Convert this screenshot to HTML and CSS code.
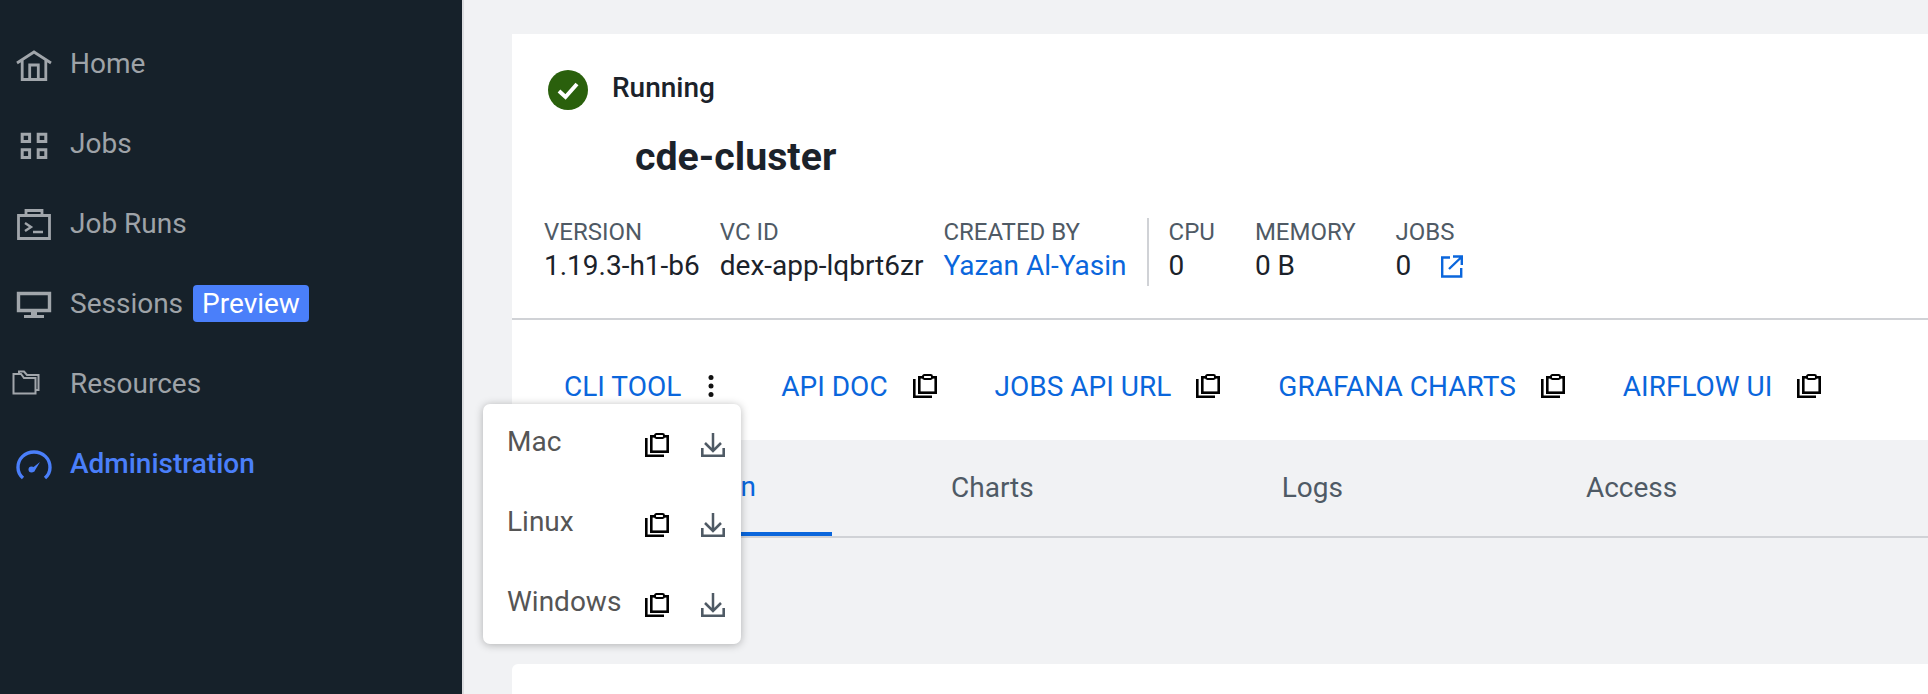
FILE: index.html
```html
<!DOCTYPE html>
<html lang="en">
<head>
    <meta charset="UTF-8">
    <title>cde-cluster</title>
    <link rel="stylesheet" href="styles.css">
</head>
<body>
    <svg class="sprites" width="0" height="0">
        <symbol id="copy" viewBox="0 0 24 24">
            <path d="M1.300 5v17.700h17.700" fill="none" stroke="#000" stroke-width="2.600"/>
            <rect x="6.300" y="3.300" width="16.400" height="15.400" fill="none" stroke="#000" stroke-width="2.600"/>
            <rect x="10" y="1" width="9" height="4" rx="1.400" fill="#fff" stroke="#000" stroke-width="2"/>
        </symbol>
        <symbol id="download" viewBox="0 0 24 24">
            <path d="M12 0v17M4 10l8 8 8-8" fill="none" stroke="#4f5a65" stroke-width="2.500"/>
            <path d="M1.300 15v7.700h21.400V15" fill="none" stroke="#4f5a65" stroke-width="2.600"/>
        </symbol>
    </svg>

    <nav class="sidebar">
        <a class="nav-item">
            <svg class="nav-icon" viewBox="0 0 36 36"><path d="M1 17 18 6l17 11M6.200 14v19.500h23.600V14M13.700 33V19h8.600v14" fill="none" stroke="#a1a6ab" stroke-width="2.800"/></svg>
            <span>Home</span>
        </a>
        <a class="nav-item">
            <svg class="nav-icon" viewBox="0 0 36 36"><path d="M6.200 8.200h7.400v7.200H6.200zM22.200 8.200h7.600v7.200h-7.600zM6.200 23.800h7.400v7.700H6.200zM22.200 23.800h7.600v7.700h-7.600z" fill="none" stroke="#a1a6ab" stroke-width="3"/></svg>
            <span>Jobs</span>
        </a>
        <a class="nav-item">
            <svg class="nav-icon" viewBox="0 0 36 36"><path d="M2.500 9.500h31v23h-31zM10 9V4.500h16V9" fill="none" stroke="#a1a6ab" stroke-width="2.800"/><path d="m9 17 6 4-6 4M17 26h10" fill="none" stroke="#a1a6ab" stroke-width="2.400"/></svg>
            <span>Job Runs</span>
        </a>
        <a class="nav-item">
            <svg class="nav-icon" viewBox="0 0 36 36"><path d="M2.500 7.500h31v17h-31z" fill="none" stroke="#a1a6ab" stroke-width="3.400"/><path d="M15 25h6v4h7v3H8v-3h7z" fill="#a1a6ab"/></svg>
            <span>Sessions</span>
            <span class="preview">Preview</span>
        </a>
        <a class="nav-item">
            <svg class="nav-icon folder" viewBox="0 0 28 26"><path d="M1.500 6v17.500h22V8H12L9 4H1.500zM7 4V1.500h5L15 5h11.500v15h-3" fill="none" stroke="#a1a6ab" stroke-width="2"/></svg>
            <span>Resources</span>
        </a>
        <a class="nav-item active">
            <svg class="nav-icon" viewBox="0 0 36 36"><path d="M7 32C3.500 29 2 25.500 2 21.500 2 12.500 9 6 18 6s16 6.500 16 15.500c0 4-1.500 7.500-5 10.500" fill="none" stroke="#4a7ffa" stroke-width="3.400"/><circle cx="15.500" cy="23.500" r="3" fill="#4a7ffa"/><path d="m15 23 9-7-6 10z" fill="#4a7ffa"/></svg>
            <span>Administration</span>
        </a>
    </nav>

    <main class="content">
        <section class="card">
            <div class="status">
                <svg class="status-icon" viewBox="0 0 40 40"><circle cx="20" cy="20" r="20" fill="#2a600c"/><path d="m11 21 6.500 6L29 14" fill="none" stroke="#fff" stroke-width="4"/></svg>
                <span class="status-text">Running</span>
            </div>
            <h1 class="title">cde-cluster</h1>
            <div class="meta">
                <div class="meta-col"><span class="meta-label">VERSION</span><span>1.19.3-h1-b6</span></div>
                <div class="meta-col"><span class="meta-label">VC ID</span><span>dex-app-lqbrt6zr</span></div>
                <div class="meta-col"><span class="meta-label">CREATED BY</span><a class="meta-link">Yazan Al-Yasin</a></div>
                <div class="meta-divider"></div>
                <div class="meta-col"><span class="meta-label">CPU</span><span>0</span></div>
                <div class="meta-col"><span class="meta-label">MEMORY</span><span>0 B</span></div>
                <div class="meta-col">
                    <span class="meta-label">JOBS</span>
                    <span class="jobs-value">0
                        <svg class="external" viewBox="0 0 22 24"><path d="M9 3.500H1.200v19h19V14" fill="none" stroke="#0a66dc" stroke-width="2.400"/><path d="M8 15 20 3.500M12 2.500h8.800v8.500" fill="none" stroke="#0a66dc" stroke-width="2.400"/></svg>
                    </span>
                </div>
            </div>
            <div class="links">
                <div class="link-item cli">
                    <a>CLI TOOL</a>
                    <svg class="dots" viewBox="0 0 10 24"><circle cx="5" cy="3.500" r="2.500"/><circle cx="5" cy="12" r="2.500"/><circle cx="5" cy="20.500" r="2.500"/></svg>
                </div>
                <div class="link-item"><a>API DOC</a><svg class="tool-icon"><use href="#copy"/></svg></div>
                <div class="link-item"><a>JOBS API URL</a><svg class="tool-icon"><use href="#copy"/></svg></div>
                <div class="link-item"><a>GRAFANA CHARTS</a><svg class="tool-icon"><use href="#copy"/></svg></div>
                <div class="link-item"><a>AIRFLOW UI</a><svg class="tool-icon"><use href="#copy"/></svg></div>
            </div>
        </section>

        <div class="tabs">
            <a class="tab tab-active">Configuration</a>
            <a class="tab tab-charts">Charts</a>
            <a class="tab tab-logs">Logs</a>
            <a class="tab tab-access">Access</a>
        </div>

        <section class="card card-bottom"></section>

        <!-- CLI TOOL dropdown -->
        <div class="menu">
            <div class="menu-item"><span class="menu-name">Mac</span><svg class="tool-icon"><use href="#copy"/></svg><svg class="tool-icon"><use href="#download"/></svg></div>
            <div class="menu-item"><span class="menu-name">Linux</span><svg class="tool-icon"><use href="#copy"/></svg><svg class="tool-icon"><use href="#download"/></svg></div>
            <div class="menu-item"><span class="menu-name">Windows</span><svg class="tool-icon"><use href="#copy"/></svg><svg class="tool-icon"><use href="#download"/></svg></div>
        </div>
    </main>
</body>
</html>
```

FILE: styles.css
```css
html, body {
    margin: 0;
    height: 694px;
    overflow: hidden;
}
body {
    display: flex;
    font-family: Roboto, "Liberation Sans", sans-serif;
    background-color: #f1f2f4;
    color: #1b222a;
}
.sprites {
    position: absolute;
}

/* sidebar */
.sidebar {
    width: 464px;
    flex-shrink: 0;
    height: 694px;
    padding-top: 24px;
    box-sizing: border-box;
    background-color: #16212a;
    border-right: 2px solid #dcdde0;
}
.nav-item {
    display: flex;
    align-items: center;
    height: 80px;
    padding-left: 16px;
    font-size: 28px;
    color: #9ea3a8;
}
.nav-item span {
    margin-bottom: 2px;
}
.nav-icon {
    width: 36px;
    height: 36px;
    margin-right: 18px;
    flex-shrink: 0;
}
.folder {
    width: 28px;
    height: 26px;
    margin-left: -4px;
    margin-right: 30px;
    margin-top: -3px;
}
.active {
    color: #4a7ffa;
    font-weight: 500;
}
.preview {
    margin-left: 10px;
    padding: 0 9px;
    line-height: 37px;
    border-radius: 4px;
    background-color: #4a7ffa;
    color: #fff;
}

/* main */
.content {
    position: relative;
    flex-grow: 1;
    padding: 34px 0 0 48px;
    overflow: hidden;
}
.card {
    background-color: #fff;
}
.status {
    display: flex;
    align-items: center;
    padding: 36px 0 0 36px;
    font-size: 28px;
    font-weight: 500;
}
.status-icon {
    width: 40px;
    height: 40px;
    margin-right: 24px;
}
.status-text {
    margin-top: -6px;
}
.title {
    margin: 23px 0 0 123px;
    font-size: 39.3px;
    line-height: 48px;
    font-weight: 700;
}
.meta {
    display: flex;
    align-items: center;
    margin: 37px 0 0 32px;
    height: 68px;
    font-size: 28px;
}
.meta-col {
    display: flex;
    flex-direction: column;
    margin-top: -6px;
    margin-right: 20px;
    line-height: 34px;
}
.meta-label {
    font-size: 24px;
    color: #4f5a65;
}
.meta-link {
    color: #0a66dc;
}
.meta-divider {
    width: 2px;
    height: 68px;
    background-color: #d0d2d6;
    margin-right: 20px;
}
.meta-col:nth-child(n+5) {
    margin-right: 40px;
}
.jobs-value {
    display: flex;
    align-items: center;
}
.external {
    width: 22px;
    height: 24px;
    margin-left: 30px;
}
.links {
    display: flex;
    align-items: center;
    height: 108px;
    margin-top: 32px;
    padding: 12px 0 0 52px;
    border-top: 2px solid #d0d2d6;
    font-size: 28px;
    color: #0a66dc;
}
.link-item {
    display: flex;
    align-items: center;
    gap: 25px;
    margin-right: 58px;
}
.tool-icon {
    width: 24px;
    height: 24px;
    flex-shrink: 0;
}
.cli {
    margin-right: 65px;
}
.dots {
    width: 10px;
    height: 24px;
    fill: #111;
}

/* tabs */
.tabs {
    display: flex;
    height: 98px;
    border-bottom: 2px solid #d0d2d6;
    font-size: 28px;
    color: #4f5a65;
    box-sizing: border-box;
}
.tab {
    display: flex;
    align-items: center;
    box-sizing: border-box;
    padding-bottom: 2px;
}
.tab-active {
    width: 320px;
    justify-content: center;
    height: 96px;
    padding-bottom: 0;
    border-bottom: 4px solid #0a66dc;
    color: #0a66dc;
}
.tab-charts {
    margin-left: 119px;
}
.tab-logs {
    margin-left: 248px;
}
.tab-access {
    margin-left: 243px;
}
.card-bottom {
    margin-top: 126px;
    height: 100px;
    border-radius: 6px 0 0 0;
}

/* dropdown */
.menu {
    position: absolute;
    left: 19px;
    top: 404px;
    width: 258px;
    height: 240px;
    border-radius: 7px;
    background-color: #fff;
    box-shadow: 0 1px 8px rgba(0, 0, 0, 0.28);
}
.menu-item {
    display: flex;
    align-items: center;
    gap: 32px;
    height: 80px;
    padding-left: 24px;
    font-size: 28px;
    color: #555;
}
.menu-name {
    width: 106px;
    flex-shrink: 0;
    margin-top: -6px;
}
.menu-item .tool-icon {
    margin-top: 2px;
}
```
